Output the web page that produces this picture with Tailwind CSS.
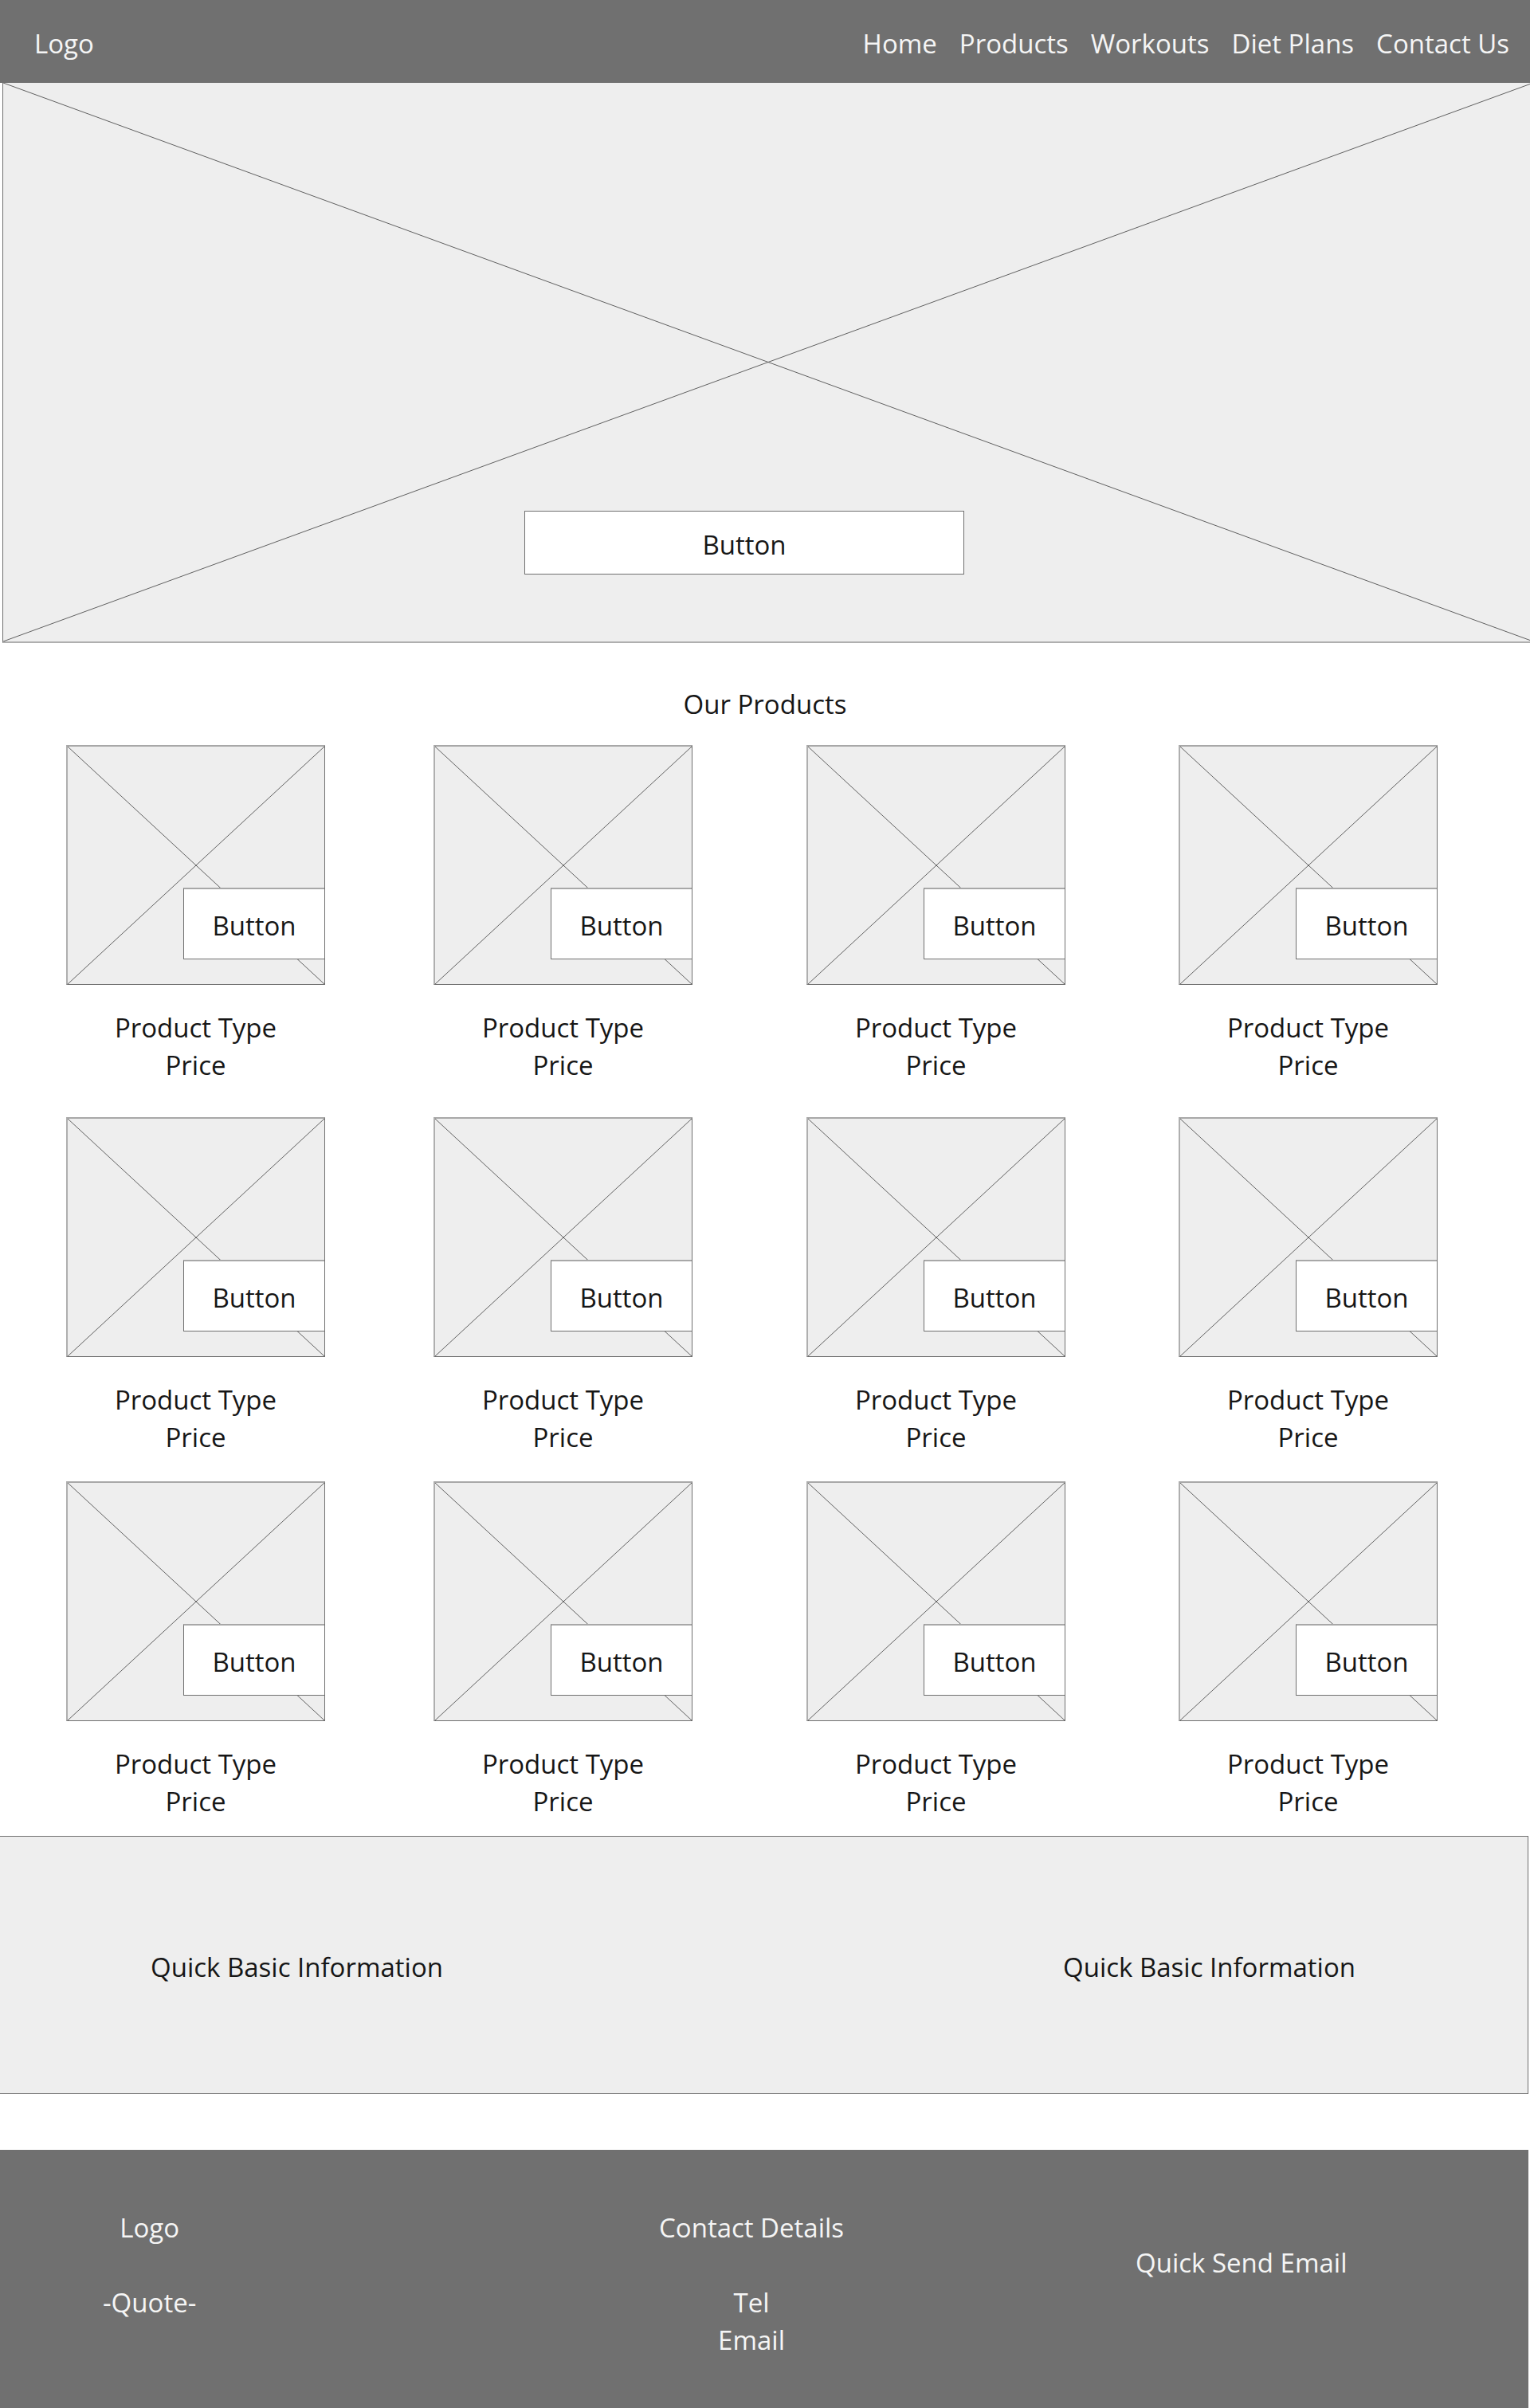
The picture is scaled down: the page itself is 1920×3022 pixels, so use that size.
<!DOCTYPE html>
<html lang="en">
<head>
<meta charset="utf-8">
<meta name="viewport" content="width=device-width, initial-scale=1">
<title>Products</title>
<script src="https://cdn.jsdelivr.net/npm/@tailwindcss/browser@4"></script>
</head>
<body class="overflow-x-hidden bg-white font-['Open_Sans',sans-serif] text-[33px] leading-[47px] text-[#161616]">

<!-- Diagonal cross shared by every image placeholder -->
<svg class="hidden" aria-hidden="true">
  <symbol id="cross" viewBox="0 0 100 100" preserveAspectRatio="none">
    <path d="M0 0L100 100M100 0L0 100" fill="none" stroke="#606060" vector-effect="non-scaling-stroke"/>
  </symbol>
</svg>

<header class="flex flex-wrap justify-between bg-[#707070] pt-[31px] pr-[26px] pb-[26px] pl-[43px] text-[#f5f5f5]">
  <a href="#">Logo</a>
  <nav class="flex flex-wrap gap-x-7">
    <a href="#">Home</a>
    <a href="#">Products</a>
    <a href="#">Workouts</a>
    <a href="#">Diet Plans</a>
    <a href="#">Contact Us</a>
  </nav>
</header>

<main>
  <section class="relative ml-[3px] -mr-1 flex h-[703px] items-end justify-center border-b-2 border-l border-b-[#afafaf] border-l-[#707070] bg-[#eeeeee] pr-[60px] pb-[84px]">
    <svg class="absolute inset-0 h-full w-full" aria-hidden="true"><use href="#cross"/></svg>
    <button type="button" class="relative h-[80px] w-[552px] border border-[#707070] bg-white pt-[5px]">Button</button>
  </section>

  <section>
    <h2 class="pt-[53px] pb-7 text-center">Our Products</h2>
    <div class="grid grid-cols-[461fr_468fr_467fr_325fr] grid-rows-[467px_457px_auto] pr-[116px] pl-[83px]">
      <article class="w-[325px] text-center">
        <div class="relative mb-[30px] h-[301px] border-t-2 border-r border-b border-l-2 border-t-[#a8a8a8] border-r-[#707070] border-b-[#707070] border-l-[#afafaf] bg-[#eeeeee]">
          <svg class="absolute inset-0 h-full w-full" aria-hidden="true"><use href="#cross"/></svg>
          <button type="button" class="absolute right-0 bottom-[31px] h-[90px] w-[177px] border-t-2 border-b border-l border-t-[#a8a8a8] border-b-[#707070] border-l-[#707070] bg-white pt-1">Button</button>
        </div>
        <h3>Product Type</h3>
        <p>Price</p>
      </article>
      <article class="w-[325px] text-center">
        <div class="relative mb-[30px] h-[301px] border-t-2 border-r border-b border-l-2 border-t-[#a8a8a8] border-r-[#707070] border-b-[#707070] border-l-[#afafaf] bg-[#eeeeee]">
          <svg class="absolute inset-0 h-full w-full" aria-hidden="true"><use href="#cross"/></svg>
          <button type="button" class="absolute right-0 bottom-[31px] h-[90px] w-[177px] border-t-2 border-b border-l border-t-[#a8a8a8] border-b-[#707070] border-l-[#707070] bg-white pt-1">Button</button>
        </div>
        <h3>Product Type</h3>
        <p>Price</p>
      </article>
      <article class="w-[325px] text-center">
        <div class="relative mb-[30px] h-[301px] border-t-2 border-r border-b border-l-2 border-t-[#a8a8a8] border-r-[#707070] border-b-[#707070] border-l-[#afafaf] bg-[#eeeeee]">
          <svg class="absolute inset-0 h-full w-full" aria-hidden="true"><use href="#cross"/></svg>
          <button type="button" class="absolute right-0 bottom-[31px] h-[90px] w-[177px] border-t-2 border-b border-l border-t-[#a8a8a8] border-b-[#707070] border-l-[#707070] bg-white pt-1">Button</button>
        </div>
        <h3>Product Type</h3>
        <p>Price</p>
      </article>
      <article class="w-[325px] text-center">
        <div class="relative mb-[30px] h-[301px] border-t-2 border-r border-b border-l-2 border-t-[#a8a8a8] border-r-[#707070] border-b-[#707070] border-l-[#afafaf] bg-[#eeeeee]">
          <svg class="absolute inset-0 h-full w-full" aria-hidden="true"><use href="#cross"/></svg>
          <button type="button" class="absolute right-0 bottom-[31px] h-[90px] w-[177px] border-t-2 border-b border-l border-t-[#a8a8a8] border-b-[#707070] border-l-[#707070] bg-white pt-1">Button</button>
        </div>
        <h3>Product Type</h3>
        <p>Price</p>
      </article>
      <article class="w-[325px] text-center">
        <div class="relative mb-[30px] h-[301px] border-t-2 border-r border-b border-l-2 border-t-[#a8a8a8] border-r-[#707070] border-b-[#707070] border-l-[#afafaf] bg-[#eeeeee]">
          <svg class="absolute inset-0 h-full w-full" aria-hidden="true"><use href="#cross"/></svg>
          <button type="button" class="absolute right-0 bottom-[31px] h-[90px] w-[177px] border-t-2 border-b border-l border-t-[#a8a8a8] border-b-[#707070] border-l-[#707070] bg-white pt-1">Button</button>
        </div>
        <h3>Product Type</h3>
        <p>Price</p>
      </article>
      <article class="w-[325px] text-center">
        <div class="relative mb-[30px] h-[301px] border-t-2 border-r border-b border-l-2 border-t-[#a8a8a8] border-r-[#707070] border-b-[#707070] border-l-[#afafaf] bg-[#eeeeee]">
          <svg class="absolute inset-0 h-full w-full" aria-hidden="true"><use href="#cross"/></svg>
          <button type="button" class="absolute right-0 bottom-[31px] h-[90px] w-[177px] border-t-2 border-b border-l border-t-[#a8a8a8] border-b-[#707070] border-l-[#707070] bg-white pt-1">Button</button>
        </div>
        <h3>Product Type</h3>
        <p>Price</p>
      </article>
      <article class="w-[325px] text-center">
        <div class="relative mb-[30px] h-[301px] border-t-2 border-r border-b border-l-2 border-t-[#a8a8a8] border-r-[#707070] border-b-[#707070] border-l-[#afafaf] bg-[#eeeeee]">
          <svg class="absolute inset-0 h-full w-full" aria-hidden="true"><use href="#cross"/></svg>
          <button type="button" class="absolute right-0 bottom-[31px] h-[90px] w-[177px] border-t-2 border-b border-l border-t-[#a8a8a8] border-b-[#707070] border-l-[#707070] bg-white pt-1">Button</button>
        </div>
        <h3>Product Type</h3>
        <p>Price</p>
      </article>
      <article class="w-[325px] text-center">
        <div class="relative mb-[30px] h-[301px] border-t-2 border-r border-b border-l-2 border-t-[#a8a8a8] border-r-[#707070] border-b-[#707070] border-l-[#afafaf] bg-[#eeeeee]">
          <svg class="absolute inset-0 h-full w-full" aria-hidden="true"><use href="#cross"/></svg>
          <button type="button" class="absolute right-0 bottom-[31px] h-[90px] w-[177px] border-t-2 border-b border-l border-t-[#a8a8a8] border-b-[#707070] border-l-[#707070] bg-white pt-1">Button</button>
        </div>
        <h3>Product Type</h3>
        <p>Price</p>
      </article>
      <article class="w-[325px] text-center">
        <div class="relative mb-[30px] h-[301px] border-t-2 border-r border-b border-l-2 border-t-[#a8a8a8] border-r-[#707070] border-b-[#707070] border-l-[#afafaf] bg-[#eeeeee]">
          <svg class="absolute inset-0 h-full w-full" aria-hidden="true"><use href="#cross"/></svg>
          <button type="button" class="absolute right-0 bottom-[31px] h-[90px] w-[177px] border-t-2 border-b border-l border-t-[#a8a8a8] border-b-[#707070] border-l-[#707070] bg-white pt-1">Button</button>
        </div>
        <h3>Product Type</h3>
        <p>Price</p>
      </article>
      <article class="w-[325px] text-center">
        <div class="relative mb-[30px] h-[301px] border-t-2 border-r border-b border-l-2 border-t-[#a8a8a8] border-r-[#707070] border-b-[#707070] border-l-[#afafaf] bg-[#eeeeee]">
          <svg class="absolute inset-0 h-full w-full" aria-hidden="true"><use href="#cross"/></svg>
          <button type="button" class="absolute right-0 bottom-[31px] h-[90px] w-[177px] border-t-2 border-b border-l border-t-[#a8a8a8] border-b-[#707070] border-l-[#707070] bg-white pt-1">Button</button>
        </div>
        <h3>Product Type</h3>
        <p>Price</p>
      </article>
      <article class="w-[325px] text-center">
        <div class="relative mb-[30px] h-[301px] border-t-2 border-r border-b border-l-2 border-t-[#a8a8a8] border-r-[#707070] border-b-[#707070] border-l-[#afafaf] bg-[#eeeeee]">
          <svg class="absolute inset-0 h-full w-full" aria-hidden="true"><use href="#cross"/></svg>
          <button type="button" class="absolute right-0 bottom-[31px] h-[90px] w-[177px] border-t-2 border-b border-l border-t-[#a8a8a8] border-b-[#707070] border-l-[#707070] bg-white pt-1">Button</button>
        </div>
        <h3>Product Type</h3>
        <p>Price</p>
      </article>
      <article class="w-[325px] text-center">
        <div class="relative mb-[30px] h-[301px] border-t-2 border-r border-b border-l-2 border-t-[#a8a8a8] border-r-[#707070] border-b-[#707070] border-l-[#afafaf] bg-[#eeeeee]">
          <svg class="absolute inset-0 h-full w-full" aria-hidden="true"><use href="#cross"/></svg>
          <button type="button" class="absolute right-0 bottom-[31px] h-[90px] w-[177px] border-t-2 border-b border-l border-t-[#a8a8a8] border-b-[#707070] border-l-[#707070] bg-white pt-1">Button</button>
        </div>
        <h3>Product Type</h3>
        <p>Price</p>
      </article>
    </div>
  </section>

  <section class="mt-5 mr-0.5 flex justify-between border-y border-r border-[#707070] bg-[#eeeeee] pt-[140px] pr-[216px] pb-[135px] pl-[189px]">
    <p>Quick Basic Information</p>
    <p>Quick Basic Information</p>
  </section>
</main>

<footer class="mt-[70px] mr-0.5 grid grid-cols-[698fr_598fr_268fr] bg-[#707070] pt-[74px] pr-[225px] pb-[62px] pl-[129px] text-center text-[#f5f5f5]">
  <div class="flex w-fit flex-col gap-[47px]">
    <p>Logo</p>
    <p>-Quote-</p>
  </div>
  <div class="flex w-fit flex-col gap-[47px]">
    <h2>Contact Details</h2>
    <address class="not-italic">
      <p>Tel</p>
      <p>Email</p>
    </address>
  </div>
  <a href="#" class="w-fit pt-11 whitespace-nowrap">Quick Send Email</a>
</footer>

</body>
</html>
